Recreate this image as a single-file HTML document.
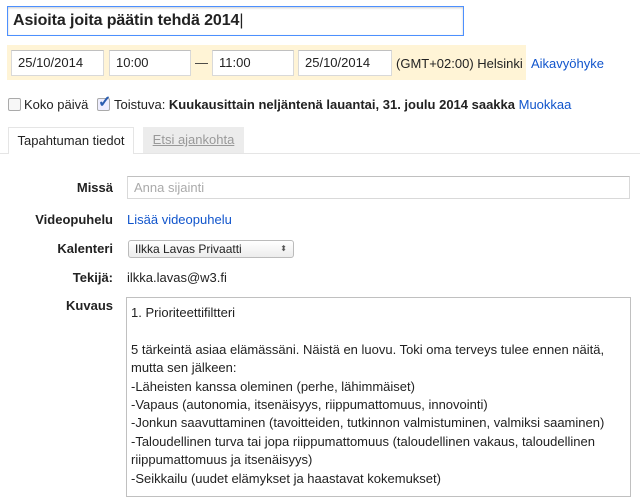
<!DOCTYPE html>
<html><head><meta charset="utf-8"><style>
body{margin:0;width:640px;height:486px;overflow:hidden;background:#fff;font-family:"Liberation Sans",Arial,sans-serif;font-size:13px;color:#222;position:relative}
.a{position:absolute}
.in{position:absolute;background:#fff;border:1px solid #d9d9d9;border-top-color:#c0c0c0;box-sizing:border-box;padding-left:6px;line-height:24px;font-size:13px}
.lbl{position:absolute;right:527px;font-weight:bold;color:#222;text-align:right}
a,.lk{color:#15c;text-decoration:none}
</style></head><body>
<div class="a" style="left:7px;top:6px;width:457px;height:30px;border:1px solid #4d90fe;box-sizing:border-box;box-shadow:inset 0 1px 2px rgba(0,0,0,.2);font-size:16px;font-weight:bold;line-height:28px;padding-left:5px;letter-spacing:-0.1px">Asioita joita päätin tehdä 2014<span style="font-weight:normal">|</span></div>
<div class="a" style="left:7px;top:45px;width:519px;height:35px;background:#fff4d6"></div>
<div class="in" style="left:11px;top:50px;width:93px;height:26px">25/10/2014</div>
<div class="in" style="left:109px;top:50px;width:82px;height:26px">10:00</div>
<div class="a" style="left:195px;top:55px;color:#333">—</div>
<div class="in" style="left:212px;top:50px;width:82px;height:26px">11:00</div>
<div class="in" style="left:298px;top:50px;width:94px;height:26px">25/10/2014</div>
<div class="a" style="left:396px;top:56px">(GMT+02:00) Helsinki</div>
<div class="a lk" style="left:531px;top:56px">Aikavyöhyke</div>
<div class="a" style="left:8px;top:98px;width:11px;height:11px;border:1px solid #aaa;border-radius:2px;background:#f7f7f7"></div>
<div class="a" style="left:24px;top:97px">Koko päivä</div>
<div class="a" style="left:97px;top:98px;width:11px;height:11px;border:1px solid #aaa;border-radius:2px;background:#eef"></div>
<div class="a" style="left:98px;top:92px;color:#2a5db0;font-size:16px;font-weight:bold">✓</div>
<div class="a" style="left:114px;top:97px">Toistuva: <b>Kuukausittain neljäntenä lauantai, 31. joulu 2014 saakka</b> <span class="lk">Muokkaa</span></div>
<div class="a" style="left:0;top:153px;width:640px;height:1px;background:#e5e5e5"></div>
<div class="a" style="left:8px;top:127px;width:126px;height:27px;background:#fff;border:1px solid #e5e5e5;border-bottom:none;box-sizing:border-box;text-align:center;line-height:26px">Tapahtuman tiedot</div>
<div class="a" style="left:143px;top:127px;width:101px;height:26px;background:#ececec;text-align:center;line-height:26px;color:#999;text-decoration:underline">Etsi ajankohta</div>
<div class="lbl" style="top:180px">Missä</div>
<div class="in" style="left:127px;top:176px;width:503px;height:23px;line-height:21px;color:#aaa">Anna sijainti</div>
<div class="lbl" style="top:212px">Videopuhelu</div>
<div class="a lk" style="left:127px;top:212px">Lisää videopuhelu</div>
<div class="lbl" style="top:241px">Kalenteri</div>
<div class="a" style="left:128px;top:240px;width:166px;height:18px;border:1px solid #bbb;border-radius:3px;box-sizing:border-box;background:linear-gradient(#fff,#ececec);font-size:12px;line-height:16px;padding-left:6px">Ilkka Lavas Privaatti<span style="position:absolute;right:6px;font-size:8px;color:#555">⬍</span></div>
<div class="lbl" style="top:270px">Tekijä:</div>
<div class="a" style="left:127px;top:270px">ilkka.lavas@w3.fi</div>
<div class="lbl" style="top:298px">Kuvaus</div>
<div class="a" style="left:126px;top:297px;width:505px;height:200px;border:1px solid #c0c0c0;box-sizing:border-box;padding:6px 4px;line-height:18.4px">1. Prioriteettifiltteri<br><br>5 tärkeintä asiaa elämässäni. Näistä en luovu. Toki oma terveys tulee ennen näitä, mutta sen jälkeen:<br>-Läheisten kanssa oleminen (perhe, lähimmäiset)<br>-Vapaus (autonomia, itsenäisyys, riippumattomuus, innovointi)<br>-Jonkun saavuttaminen (tavoitteiden, tutkinnon valmistuminen, valmiksi saaminen)<br>-Taloudellinen turva tai jopa riippumattomuus (taloudellinen vakaus, taloudellinen riippumattomuus ja itsenäisyys)<br>-Seikkailu (uudet elämykset ja haastavat kokemukset)</div>
</body></html>
